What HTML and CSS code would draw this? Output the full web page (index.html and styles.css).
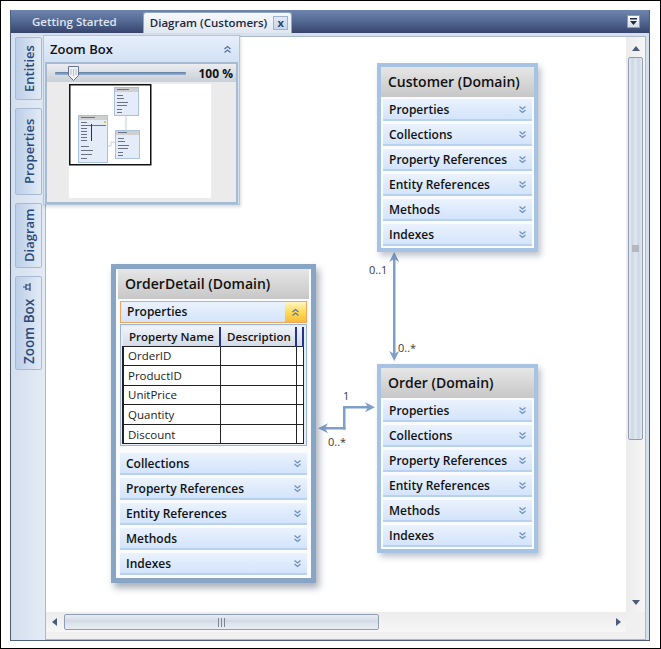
FILE: index.html
```html
<!DOCTYPE html>
<html lang="en">
<head>
  <meta charset="UTF-8">
  <meta name="viewport" content="width=device-width, initial-scale=1.0">
  <title>Diagram (Customers)</title>
  <link rel="stylesheet" href="styles.css">
</head>
<body>
  <div class="shot">
    <div class="window">
      <div class="tabbar">
        <div class="tab">Getting Started</div>
        <div class="tab active">Diagram (Customers) <span class="tab-close">x</span></div>
        <div class="tab-menu">
          <svg width="9" height="9" viewBox="0 0 9 9"><rect x="1" y="1" width="7" height="1.5" fill="#1d2b48"/><path d="M1 4h7L4.5 8z" fill="#1d2b48"/></svg>
        </div>
      </div>

      <div class="body">
        <div class="side">
          <div class="side-tab t-entities">Entities</div>
          <div class="side-tab t-props">Properties</div>
          <div class="side-tab t-diagram">Diagram</div>
          <div class="side-tab t-zoom">Zoom Box
            <svg class="pin" width="10" height="10" viewBox="0 0 10 10"><path d="M5 0v3M2 3h6M3 3v4h4V3M1 7h8" fill="none" stroke="#2e4a7a" stroke-width="1.2"/></svg>
          </div>
        </div>

        <div class="main">
          <div class="canvas">
            <svg class="links" width="580" height="575" viewBox="0 0 580 575">
              <g fill="#7d9fca" stroke="none">
                <rect x="347" y="220" width="2.5" height="100"/>
                <path d="M348.2 215l-5 10 5-3 5 3z"/>
                <path d="M348.2 324l-5-10 5 3 5-3z"/>
                <rect x="278" y="390" width="21.5" height="2.5"/>
                <rect x="297" y="369" width="2.5" height="23.5"/>
                <rect x="297" y="369" width="27" height="2.5"/>
                <path d="M272 391.2l10-5-3 5 3 5z"/>
                <path d="M329 370.2l-10-5 3 5-3 5z"/>
              </g>
              <g class="mult">
                <text x="323" y="237">0..1</text>
                <text x="352" y="315">0..*</text>
                <text x="297" y="363">1</text>
                <text x="282" y="409">0..*</text>
              </g>
            </svg>

            <div class="entity e-customer">
              <div class="entity-head">Customer (Domain)</div>
              <div class="entity-row">Properties <svg class="chev" viewBox="0 0 9 9"><path d="M1.5 1.5l3 2.5 3-2.5M1.5 5l3 2.5 3-2.5"/></svg></div>
              <div class="entity-row">Collections <svg class="chev" viewBox="0 0 9 9"><path d="M1.5 1.5l3 2.5 3-2.5M1.5 5l3 2.5 3-2.5"/></svg></div>
              <div class="entity-row">Property References <svg class="chev" viewBox="0 0 9 9"><path d="M1.5 1.5l3 2.5 3-2.5M1.5 5l3 2.5 3-2.5"/></svg></div>
              <div class="entity-row">Entity References <svg class="chev" viewBox="0 0 9 9"><path d="M1.5 1.5l3 2.5 3-2.5M1.5 5l3 2.5 3-2.5"/></svg></div>
              <div class="entity-row">Methods <svg class="chev" viewBox="0 0 9 9"><path d="M1.5 1.5l3 2.5 3-2.5M1.5 5l3 2.5 3-2.5"/></svg></div>
              <div class="entity-row">Indexes <svg class="chev" viewBox="0 0 9 9"><path d="M1.5 1.5l3 2.5 3-2.5M1.5 5l3 2.5 3-2.5"/></svg></div>
            </div>

            <div class="entity e-order">
              <div class="entity-head">Order (Domain)</div>
              <div class="entity-row">Properties <svg class="chev" viewBox="0 0 9 9"><path d="M1.5 1.5l3 2.5 3-2.5M1.5 5l3 2.5 3-2.5"/></svg></div>
              <div class="entity-row">Collections <svg class="chev" viewBox="0 0 9 9"><path d="M1.5 1.5l3 2.5 3-2.5M1.5 5l3 2.5 3-2.5"/></svg></div>
              <div class="entity-row">Property References <svg class="chev" viewBox="0 0 9 9"><path d="M1.5 1.5l3 2.5 3-2.5M1.5 5l3 2.5 3-2.5"/></svg></div>
              <div class="entity-row">Entity References <svg class="chev" viewBox="0 0 9 9"><path d="M1.5 1.5l3 2.5 3-2.5M1.5 5l3 2.5 3-2.5"/></svg></div>
              <div class="entity-row">Methods <svg class="chev" viewBox="0 0 9 9"><path d="M1.5 1.5l3 2.5 3-2.5M1.5 5l3 2.5 3-2.5"/></svg></div>
              <div class="entity-row">Indexes <svg class="chev" viewBox="0 0 9 9"><path d="M1.5 1.5l3 2.5 3-2.5M1.5 5l3 2.5 3-2.5"/></svg></div>
            </div>

            <div class="entity e-detail selected">
              <div class="entity-head">OrderDetail (Domain)</div>
              <div class="entity-row open">Properties
                <span class="row-toggle"><svg class="chev up" viewBox="0 0 9 9"><path d="M1.5 4l3-2.5 3 2.5M1.5 7.5l3-2.5 3 2.5"/></svg></span>
              </div>
              <div class="props-wrap">
                <table class="props">
                  <thead>
                    <tr><th class="c-name">Property Name</th><th class="c-desc">Description</th><th class="c-end"></th></tr>
                  </thead>
                  <tbody>
                    <tr><td>OrderID</td><td></td><td></td></tr>
                    <tr><td>ProductID</td><td></td><td></td></tr>
                    <tr><td>UnitPrice</td><td></td><td></td></tr>
                    <tr><td>Quantity</td><td></td><td></td></tr>
                    <tr><td>Discount</td><td></td><td></td></tr>
                  </tbody>
                </table>
              </div>
              <div class="entity-row">Collections <svg class="chev" viewBox="0 0 9 9"><path d="M1.5 1.5l3 2.5 3-2.5M1.5 5l3 2.5 3-2.5"/></svg></div>
              <div class="entity-row">Property References <svg class="chev" viewBox="0 0 9 9"><path d="M1.5 1.5l3 2.5 3-2.5M1.5 5l3 2.5 3-2.5"/></svg></div>
              <div class="entity-row">Entity References <svg class="chev" viewBox="0 0 9 9"><path d="M1.5 1.5l3 2.5 3-2.5M1.5 5l3 2.5 3-2.5"/></svg></div>
              <div class="entity-row">Methods <svg class="chev" viewBox="0 0 9 9"><path d="M1.5 1.5l3 2.5 3-2.5M1.5 5l3 2.5 3-2.5"/></svg></div>
              <div class="entity-row">Indexes <svg class="chev" viewBox="0 0 9 9"><path d="M1.5 1.5l3 2.5 3-2.5M1.5 5l3 2.5 3-2.5"/></svg></div>
            </div>
          </div>

          <div class="vscroll">
            <div class="sb-btn"><span class="tri-up"></span></div>
            <div class="sb-thumb v-thumb"><span class="grip-v"></span></div>
            <div class="sb-btn end"><span class="tri-down"></span></div>
          </div>
          <div class="hscroll">
            <div class="sb-btn"><span class="tri-left"></span></div>
            <div class="sb-thumb h-thumb"><span class="grip-h"></span></div>
            <div class="sb-btn end"><span class="tri-right"></span></div>
          </div>
        </div>
      </div>

      <!-- flyout opened from the Zoom Box side tab -->
      <div class="zoombox">
        <div class="zb-head">Zoom Box
          <svg class="chev up dark" viewBox="0 0 9 9"><path d="M1.5 4l3-2.5 3 2.5M1.5 7.5l3-2.5 3 2.5"/></svg>
        </div>
        <div class="zb-body">
          <div class="zb-slider">
            <div class="zb-track">
              <svg class="zb-thumb" width="11" height="15" viewBox="0 0 11 15"><path d="M0.5 0.5h10v9l-5 5-5-5z" fill="#eef0f3" stroke="#66758f"/><path d="M3 3v6M5.5 3v7M8 3v6" stroke="#b9c0cc"/></svg>
            </div>
            <span class="zb-pct">100 %</span>
          </div>
          <div class="zb-page">
            <svg width="142" height="114" viewBox="0 0 142 114">
              <g fill="none" stroke="#c2cfdf" stroke-width="1">
                <path d="M57 31v15M38 62h4v-4h4"/>
              </g>
              <g stroke="#a9c2e0" fill="#e3ecf8">
                <rect x="45.5" y="3.5" width="24" height="28"/>
                <rect x="9.5" y="31.5" width="29" height="47"/>
                <rect x="46.5" y="46.5" width="24" height="28"/>
              </g>
              <g fill="#cfcfcf">
                <rect x="46" y="4" width="23" height="4"/>
                <rect x="10" y="32" width="28" height="4"/>
                <rect x="47" y="47" width="23" height="4"/>
              </g>
              <g fill="#6d7280">
                <rect x="48" y="5" width="12" height="1"/>
                <rect x="48" y="11" width="6" height="1"/><rect x="48" y="14" width="7" height="1"/>
                <rect x="48" y="18" width="11" height="1"/><rect x="48" y="21" width="10" height="1"/>
                <rect x="48" y="25" width="5" height="1"/><rect x="48" y="28" width="5" height="1"/>
                <rect x="12" y="33" width="14" height="1"/>
                <rect x="12" y="38" width="6" height="1"/>
                <rect x="12" y="41" width="25" height="1"/>
                <rect x="12" y="44" width="6" height="1"/><rect x="12" y="47" width="6" height="1"/>
                <rect x="12" y="50" width="6" height="1"/><rect x="12" y="53" width="6" height="1"/>
                <rect x="12" y="56" width="6" height="1"/>
                <rect x="12" y="62" width="8" height="1"/><rect x="12" y="66" width="12" height="1"/>
                <rect x="12" y="70" width="11" height="1"/><rect x="12" y="74" width="6" height="1"/>
                <rect x="49" y="48" width="9" height="1"/>
                <rect x="49" y="54" width="6" height="1"/><rect x="49" y="57" width="7" height="1"/>
                <rect x="49" y="61" width="11" height="1"/><rect x="49" y="64" width="10" height="1"/>
                <rect x="49" y="68" width="5" height="1"/><rect x="49" y="71" width="5" height="1"/>
              </g>
              <rect x="22" y="40" width="1" height="17" fill="#333"/>
              <rect x="35" y="37" width="2" height="2" fill="#f3c33a"/>
              <rect x="0.75" y="0.75" width="81" height="80" fill="none" stroke="#111" stroke-width="1.5"/>
            </svg>
          </div>
        </div>
      </div>
    </div>
  </div>
</body>
</html>
```

FILE: styles.css
```css
* {
  box-sizing: border-box;
}
body {
  margin: 0;
  background: #fff;
  font-family: "Open Sans", "DejaVu Sans", sans-serif;
  color: #111;
}
.shot {
  width: 661px;
  height: 649px;
  border: 1px solid #000;
  padding: 9px 0 0 9px;
  background: #fff;
}
.window {
  position: relative;
  width: 640px;
  height: 631px;
  border: 1px solid #4f5e7d;
  border-top: none;
  display: flex;
  flex-direction: column;
  background: #d8e2ee;
}

/* document tabs */
.tabbar {
  height: 23px;
  display: flex;
  align-items: flex-end;
  padding-left: 11px;
  background: linear-gradient(#6d85ad, #566b95 45%, #36446b);
}
.tab {
  height: 21px;
  padding: 0 10px;
  font-size: 11.5px;
  font-weight: 600;
  line-height: 20px;
  color: #dfe6f1;
}
.tab.active {
  margin-left: 16px;
  padding: 0 3px 0 6px;
  display: flex;
  align-items: center;
  gap: 6px;
  color: #1b2740;
  background: linear-gradient(#f6f8fc, #dfe7f2);
  border: 1px solid #93a7c5;
  border-bottom: none;
  border-radius: 3px 3px 0 0;
}
.tab-close {
  width: 15px;
  height: 14px;
  border: 1px solid #9fb2cc;
  background: linear-gradient(#e2eaf5, #c7d6ea);
  font-size: 11px;
  font-weight: 700;
  line-height: 11px;
  text-align: center;
  color: #28467c;
}
.tab-menu {
  margin-left: auto;
  margin-right: 9px;
  align-self: center;
  width: 13px;
  height: 13px;
  border: 1px solid #8b9bb4;
  background: linear-gradient(#fdfdfe, #d6dde7);
  display: flex;
  align-items: center;
  justify-content: center;
}

.body {
  flex: 1;
  display: flex;
  padding-top: 3px;
  background: #d6e0ed;
}

/* vertical side tabs */
.side {
  width: 34px;
  padding: 1px 0 0 4px;
  display: flex;
  flex-direction: column;
  gap: 8px;
  background: linear-gradient(90deg, #d4dfee, #e3ebf5);
}
.side-tab {
  width: 27px;
  writing-mode: vertical-rl;
  transform: rotate(180deg);
  display: flex;
  align-items: center;
  justify-content: center;
  font-size: 13px;
  font-weight: 600;
  color: #2d4a7c;
  background: linear-gradient(270deg, #bccfe8, #e2ebf6);
  border: 1px solid #a8bad3;
  border-radius: 2px;
}
.t-entities {
  height: 63px;
}
.t-props {
  height: 87px;
}
.t-diagram {
  height: 65px;
}
.t-zoom {
  height: 94px;
  font-size: 13.5px;
}
.side-tab .pin {
  margin-top: 6px;
  transform: rotate(90deg);
}

.main {
  flex: 1;
  margin-right: 3px;
  border: 1px solid #aab8cc;
  display: grid;
  grid-template-columns: 1fr 19px;
  grid-template-rows: 575px 20px;
  padding-bottom: 7px;
  background: #f0f0f0;
}
.canvas {
  position: relative;
  overflow: hidden;
  background: #fff;
}
.links {
  position: absolute;
  left: 0;
  top: 0;
}
.mult text {
  font-family: "Open Sans", sans-serif;
  font-size: 11px;
  fill: #3a3a3a;
}

/* entity shapes */
.entity {
  position: absolute;
  width: 161px;
  border: 4px solid #a7c3e3;
  padding: 0 2px 2px;
  background: #f9fbfd;
  box-shadow: 3px 4px 6px rgba(50, 70, 100, 0.3);
}
.e-customer {
  left: 331px;
  top: 26px;
}
.e-order {
  left: 331px;
  top: 327px;
}
.e-detail {
  left: 65px;
  top: 227px;
  width: 205px;
  padding: 0 4px 3px;
}
.entity.selected {
  border: 5px solid #88a5c6;
  box-shadow: 3px 5px 7px rgba(40, 55, 80, 0.4);
}
.entity-head {
  height: 30px;
  margin: 0 -2px 2px;
  padding-left: 7px;
  font-size: 14px;
  font-weight: 600;
  line-height: 30px;
  background: linear-gradient(#e6e6e6, #c7c7c7);
}
.entity-row {
  height: 22px;
  margin-bottom: 3px;
  padding: 0 5px 0 6px;
  display: flex;
  align-items: center;
  justify-content: space-between;
  font-size: 12px;
  font-weight: 600;
  background: linear-gradient(#eaf2fd, #d3e4fb);
  border-bottom: 2px solid #b8d1f1;
}
.entity-row:last-child {
  margin-bottom: 0;
}
.entity-row.open {
  margin-bottom: 1px;
  padding-right: 0;
  border: 1px solid #f0a55c;
  align-items: stretch;
  line-height: 20px;
}
.row-toggle {
  width: 21px;
  display: flex;
  align-items: center;
  justify-content: center;
  background: linear-gradient(#fff6c4, #ffd84f 55%, #f6bd3c);
}
.chev {
  width: 9px;
  height: 9px;
}
.chev path {
  fill: none;
  stroke: #6f91bf;
  stroke-width: 1.3;
}
.chev.up path {
  stroke: #5d76a3;
}
.chev.dark path {
  stroke: #53729f;
}

/* properties grid */
.props-wrap {
  margin-bottom: 7px;
  padding: 2px 2px 1px 1px;
  border: 1px solid #9cb3d1;
  background: #e8eef6;
}
.props {
  width: 100%;
  border-collapse: collapse;
  font-size: 11.5px;
}
.props th {
  height: 19px;
  padding: 0 0 0 6px;
  text-align: left;
  font-weight: 600;
  background: linear-gradient(#f0f3f8, #d2dbe8);
  border-right: 2px solid #26348c;
  border-bottom: 1px solid #222;
}
.props th.c-name {
  width: 97px;
}
.props th.c-desc {
  width: 76px;
}
.props th.c-end {
  padding: 0;
}
.props td {
  height: 19.6px;
  padding: 0 0 0 4px;
  background: #fff;
  border: 1px solid #222;
  border-top: none;
  color: #222;
}
.props td:first-child {
  border-left: 2px solid #222;
}

/* scrollbars */
.vscroll {
  display: flex;
  flex-direction: column;
  align-items: center;
  padding: 3px 2px 2px;
  background: linear-gradient(90deg, #ececec, #f6f6f6);
}
.hscroll {
  display: flex;
  align-items: center;
  background: linear-gradient(#ececec, #f6f6f6);
}
.sb-btn {
  width: 16px;
  height: 16px;
  flex: none;
  display: flex;
  align-items: center;
  justify-content: center;
}
.sb-btn.end {
  margin-left: auto;
  margin-top: auto;
}
.hscroll .sb-btn.end {
  margin-top: 0;
}
.tri-up,
.tri-down,
.tri-left,
.tri-right {
  width: 0;
  height: 0;
  border: 4px solid transparent;
}
.tri-up {
  border-bottom: 5px solid #4b5b7a;
  border-top-width: 0;
}
.tri-down {
  border-top: 5px solid #4b5b7a;
  border-bottom-width: 0;
}
.tri-left {
  border-right: 5px solid #4b5b7a;
  border-left-width: 0;
}
.tri-right {
  border-left: 5px solid #4b5b7a;
  border-right-width: 0;
}
.sb-thumb {
  display: flex;
  align-items: center;
  justify-content: center;
  border: 1px solid #8f9db5;
  border-radius: 2px;
}
.v-thumb {
  width: 15px;
  height: 383px;
  margin-top: 1px;
  background: linear-gradient(90deg, #e6ebf2, #cdd7e4 25%, #dfe6ef 50%, #cdd7e4 75%, #e6ebf2);
}
.h-thumb {
  width: 315px;
  height: 16px;
  margin-left: 2px;
  background: linear-gradient(#e8edf3, #cfd8e4 50%, #d9e1eb 51%, #e8edf3);
}
.grip-v {
  width: 7px;
  height: 7px;
  background: #b3b7be;
}
.grip-h {
  width: 7px;
  height: 9px;
  border-left: 1px solid #7d8595;
  border-right: 1px solid #7d8595;
  background: linear-gradient(90deg, transparent 2px, #7d8595 2px, #7d8595 3px, transparent 3px);
}

/* zoom box flyout */
.zoombox {
  position: absolute;
  left: 32px;
  top: 25px;
  width: 197px;
  height: 170px;
  padding: 0 1px 1px;
  border: 1px solid #b2c5de;
  background: linear-gradient(#e6effb, #d2e1f5 26px, #dae5f2 26px);
  box-shadow: 1px 2px 3px rgba(0, 0, 0, 0.15);
}
.zb-head {
  height: 26px;
  padding: 0 6px 0 5px;
  display: flex;
  align-items: center;
  justify-content: space-between;
  font-size: 13px;
  font-weight: 600;
}
.zb-body {
  height: 142px;
  border: 2px solid #a6bad4;
  background: #ebebeb;
}
.zb-slider {
  height: 18px;
  padding: 0 3px 0 8px;
  display: flex;
  align-items: center;
  background: linear-gradient(#ebedf0, #c9cfd7);
}
.zb-track {
  position: relative;
  flex: 1;
  height: 3px;
  margin-right: 12px;
  background: linear-gradient(#5f7ea8, #9cb3d1);
  border-radius: 1px;
}
.zb-thumb {
  position: absolute;
  left: 13px;
  top: -6px;
}
.zb-pct {
  font-size: 12px;
  font-weight: 700;
}
.zb-page {
  width: 142px;
  height: 114px;
  margin: 2px 0 0 22px;
  background: #fff;
}
.zb-page svg {
  display: block;
}
```
